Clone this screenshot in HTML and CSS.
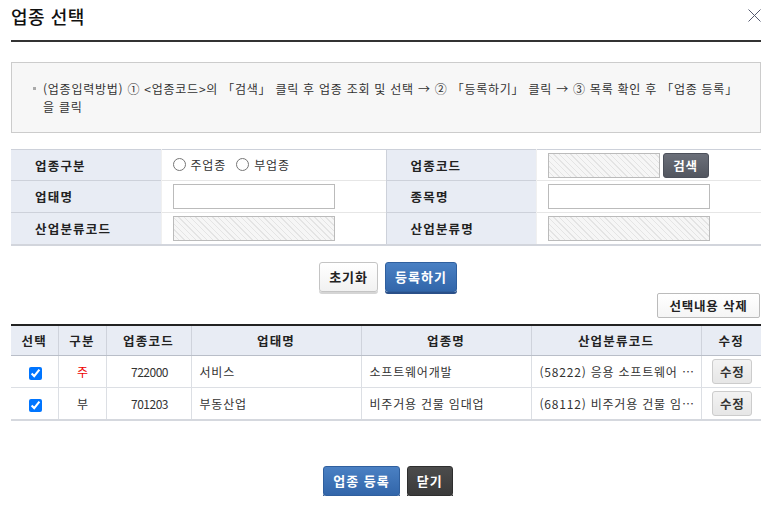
FILE: index.html
```html
<!DOCTYPE html>
<html lang="ko">
<head>
  <meta charset="UTF-8" />
  <meta name="viewport" content="width=device-width, initial-scale=1.0" />
  <title>업종 선택</title>
  <link rel="stylesheet" href="styles.css">
</head>
<body>
  <div class="layer">
    <div class="layer-head">
      <h2>업종 선택</h2>
      <button class="btn-close" title="닫기">
        <svg width="13" height="13" viewBox="0 0 13 13"><path d="M0.5 0.5 L12.5 12.5 M12.5 0.5 L0.5 12.5" stroke="#555a70" stroke-width="1" fill="none"/></svg>
      </button>
    </div>

    <div class="guide">
      <p><span class="bullet"></span>(업종입력방법) ① &lt;업종코드&gt;의 「검색」 클릭 후 업종 조회 및 선택 → ② 「등록하기」 클릭 → ③ 목록 확인 후 「업종 등록」 을 클릭</p>
    </div>

    <table class="form-tbl">
      <colgroup><col class="c-th"><col class="c-td"><col class="c-th"><col class="c-td"></colgroup>
      <tr>
        <th>업종구분</th>
        <td>
          <label class="radio"><input type="radio" name="kind"> 주업종</label>
          <label class="radio"><input type="radio" name="kind"> 부업종</label>
        </td>
        <th>업종코드</th>
        <td><input type="text" class="ipt ipt-code" disabled><button class="btn-search">검색</button></td>
      </tr>
      <tr>
        <th>업태명</th>
        <td><input type="text" class="ipt"></td>
        <th>종목명</th>
        <td><input type="text" class="ipt"></td>
      </tr>
      <tr>
        <th>산업분류코드</th>
        <td><input type="text" class="ipt" disabled></td>
        <th>산업분류명</th>
        <td><input type="text" class="ipt" disabled></td>
      </tr>
    </table>

    <div class="btn-row">
      <button class="btn btn-white">초기화</button>
      <button class="btn btn-blue">등록하기</button>
    </div>

    <div class="list-top">
      <button class="btn-del">선택내용 삭제</button>
    </div>

    <table class="list-tbl">
      <colgroup>
        <col style="width:47px"><col style="width:48px"><col style="width:85px"><col style="width:170px">
        <col style="width:170px"><col style="width:170px"><col style="width:60px">
      </colgroup>
      <thead>
        <tr>
          <th>선택</th><th>구분</th><th>업종코드</th><th>업태명</th><th>업종명</th><th>산업분류코드</th><th>수정</th>
        </tr>
      </thead>
      <tbody>
        <tr>
          <td><input type="checkbox" checked></td>
          <td class="main">주</td>
          <td class="num">722000</td>
          <td class="left">서비스</td>
          <td class="left">소프트웨어개발</td>
          <td class="ellipsis">(58222) 응용 소프트웨어 개발 및 공급업</td>
          <td><button class="btn-edit">수정</button></td>
        </tr>
        <tr>
          <td><input type="checkbox" checked></td>
          <td>부</td>
          <td class="num">701203</td>
          <td class="left">부동산업</td>
          <td class="left">비주거용 건물 임대업</td>
          <td class="ellipsis">(68112) 비주거용 건물 임대업</td>
          <td><button class="btn-edit">수정</button></td>
        </tr>
      </tbody>
    </table>

    <div class="btn-row bottom">
      <button class="btn btn-blue">업종 등록</button>
      <button class="btn btn-dark">닫기</button>
    </div>
  </div>
</body>
</html>
```

FILE: styles.css
```css
* {
  box-sizing: border-box;
}
body {
  margin: 0;
  font-family: "Noto Sans CJK KR", "Noto Sans", sans-serif;
  font-size: 12px;
  letter-spacing: 0.8px;
  color: #222;
  background: #fff;
}
button {
  font-family: inherit;
  letter-spacing: inherit;
  cursor: pointer;
}
.layer {
  width: 750px;
  margin-left: 11px;
}
.layer-head {
  height: 42px;
  border-bottom: 2px solid #333;
  display: flex;
  justify-content: space-between;
  align-items: flex-start;
}
.layer-head h2 {
  margin: 0;
  padding-top: 4px;
  font-size: 18px;
  font-weight: 500;
  color: #111;
  line-height: 24px;
  letter-spacing: 0.5px;
}
.btn-close {
  border: 0;
  background: none;
  padding: 0;
  margin-top: 9px;
  width: 13px;
  height: 13px;
  line-height: 0;
}
.guide {
  margin-top: 20px;
  height: 71px;
  border: 1px solid #ccc;
  background: #f7f7f7;
  padding: 17px 12px 0 20px;
}
.guide p {
  margin: 0;
  line-height: 18px;
  font-size: 12px;
  color: #333;
  padding-left: 11px;
  position: relative;
  letter-spacing: 0.75px;
}
.bullet {
  position: absolute;
  left: 1px;
  top: 7px;
  width: 3px;
  height: 3px;
  background: #aaa;
}

/* form */
.form-tbl {
  width: 100%;
  margin-top: 16px;
  border-collapse: collapse;
  border-top: 1px solid #cdd1da;
  border-bottom: 2px solid #d2d5dc;
}
.c-th { width: 150px; }
.c-td { width: 225px; }
.form-tbl th,
.form-tbl td {
  height: 32px;
  padding: 0;
}
.form-tbl tr:first-child th,
.form-tbl tr:first-child td {
  height: 31px;
  border-top: 0;
}
.form-tbl th {
  background: #e8ecf4;
  text-align: left;
  padding-left: 24px;
  font-size: 12.5px;
  font-weight: bold;
  color: #222;
  letter-spacing: 1.2px;
  border-top: 1px solid #cdd1da;
}
.form-tbl td {
  padding-left: 11px;
  border-top: 1px solid #e6e6e6;
  border-left: 1px solid #f0f0f0;
}
.form-tbl td + th {
  border-left: 1px solid #cdd1da;
}
.radio {
  display: inline-flex;
  align-items: center;
  margin-right: 6px;
  font-size: 12px;
  color: #333;
}
.radio input {
  margin: 0 5px 0 0;
  width: 13px;
  height: 13px;
}
.ipt {
  width: 162px;
  height: 25px;
  border: 1px solid #bbb;
  background: #fff;
  vertical-align: middle;
  margin: 0;
}
.ipt:disabled {
  background: repeating-linear-gradient(45deg, #f6f6f6 0 3px, #e4e4e4 3px 4px);
}
.ipt-code {
  width: 112px;
}
.btn-search {
  height: 25px;
  width: 46px;
  margin-left: 3px;
  border: 1px solid #4c505a;
  border-radius: 3px;
  background: linear-gradient(#6b6f79, #52565f);
  color: #fff;
  font-weight: bold;
  font-size: 12.5px;
  padding: 0;
  vertical-align: middle;
}

/* buttons */
.btn-row {
  display: flex;
  justify-content: center;
  gap: 7px;
  margin-top: 16px;
  padding-left: 4px;
}
.btn {
  height: 30px;
  padding: 0 9px;
  border-radius: 3px;
  font-size: 13px;
  font-weight: bold;
  letter-spacing: 1px;
  white-space: nowrap;
}
.btn-white {
  border: 1px solid #c4c4c4;
  background: linear-gradient(#fff, #f1f1f1);
  color: #222;
  box-shadow: 0 2px 0 #d5d5d5;
}
.btn-blue {
  border: 1px solid #2f5f9e;
  background: linear-gradient(#4a80c3, #3266aa);
  color: #fff;
  box-shadow: 0 2px 0 #2a5089;
}
.btn-dark {
  border: 1px solid #2e2e2e;
  background: linear-gradient(#4c4c4c, #3a3a3a);
  color: #fff;
  box-shadow: 0 2px 0 #222;
}
.list-top {
  display: flex;
  justify-content: flex-end;
  margin-top: 1px;
}
.btn-del {
  height: 25px;
  width: 103px;
  border: 1px solid #bbb;
  border-radius: 2px;
  background: linear-gradient(#fff, #f5f5f5);
  font-size: 12.5px;
  font-weight: bold;
  color: #222;
  padding: 0;
  margin-right: 1px;
  white-space: nowrap;
}

/* list */
.list-tbl {
  width: 100%;
  margin-top: 6px;
  border-collapse: collapse;
  table-layout: fixed;
  border-top: 2px solid #222;
  border-bottom: 2px solid #d5d8de;
}
.list-tbl th {
  height: 31px;
  padding: 0;
  background: #e8ecf4;
  font-size: 12.5px;
  font-weight: bold;
  color: #222;
  letter-spacing: 1.2px;
  border-left: 1px solid #cfd3dc;
  border-bottom: 1px solid #b9bec8;
}
.list-tbl td {
  height: 32px;
  text-align: center;
  font-size: 12px;
  color: #333;
  border-left: 1px solid #dcdfe4;
  border-top: 1px solid #dcdfe4;
  padding: 0 6px 0 8px;
}
.list-tbl th:first-child,
.list-tbl td:first-child {
  border-left: 0;
}
.list-tbl td.left {
  text-align: left;
}
.list-tbl td.num {
  letter-spacing: -0.5px;
}
.list-tbl td.main {
  color: #e00;
}
.list-tbl td.ellipsis {
  text-align: left;
  white-space: nowrap;
  overflow: hidden;
  text-overflow: ellipsis;
}
.list-tbl input[type=checkbox] {
  margin: 0;
  width: 13px;
  height: 13px;
  vertical-align: middle;
}
.btn-edit {
  height: 25px;
  width: 40px;
  padding: 0;
  border: 1px solid #ccc;
  border-radius: 3px;
  background: linear-gradient(#f3f3f3, #e6e6e6);
  font-size: 12.5px;
  font-weight: bold;
  color: #333;
  vertical-align: middle;
}
.btn-row.bottom {
  margin-top: 45px;
}
```
